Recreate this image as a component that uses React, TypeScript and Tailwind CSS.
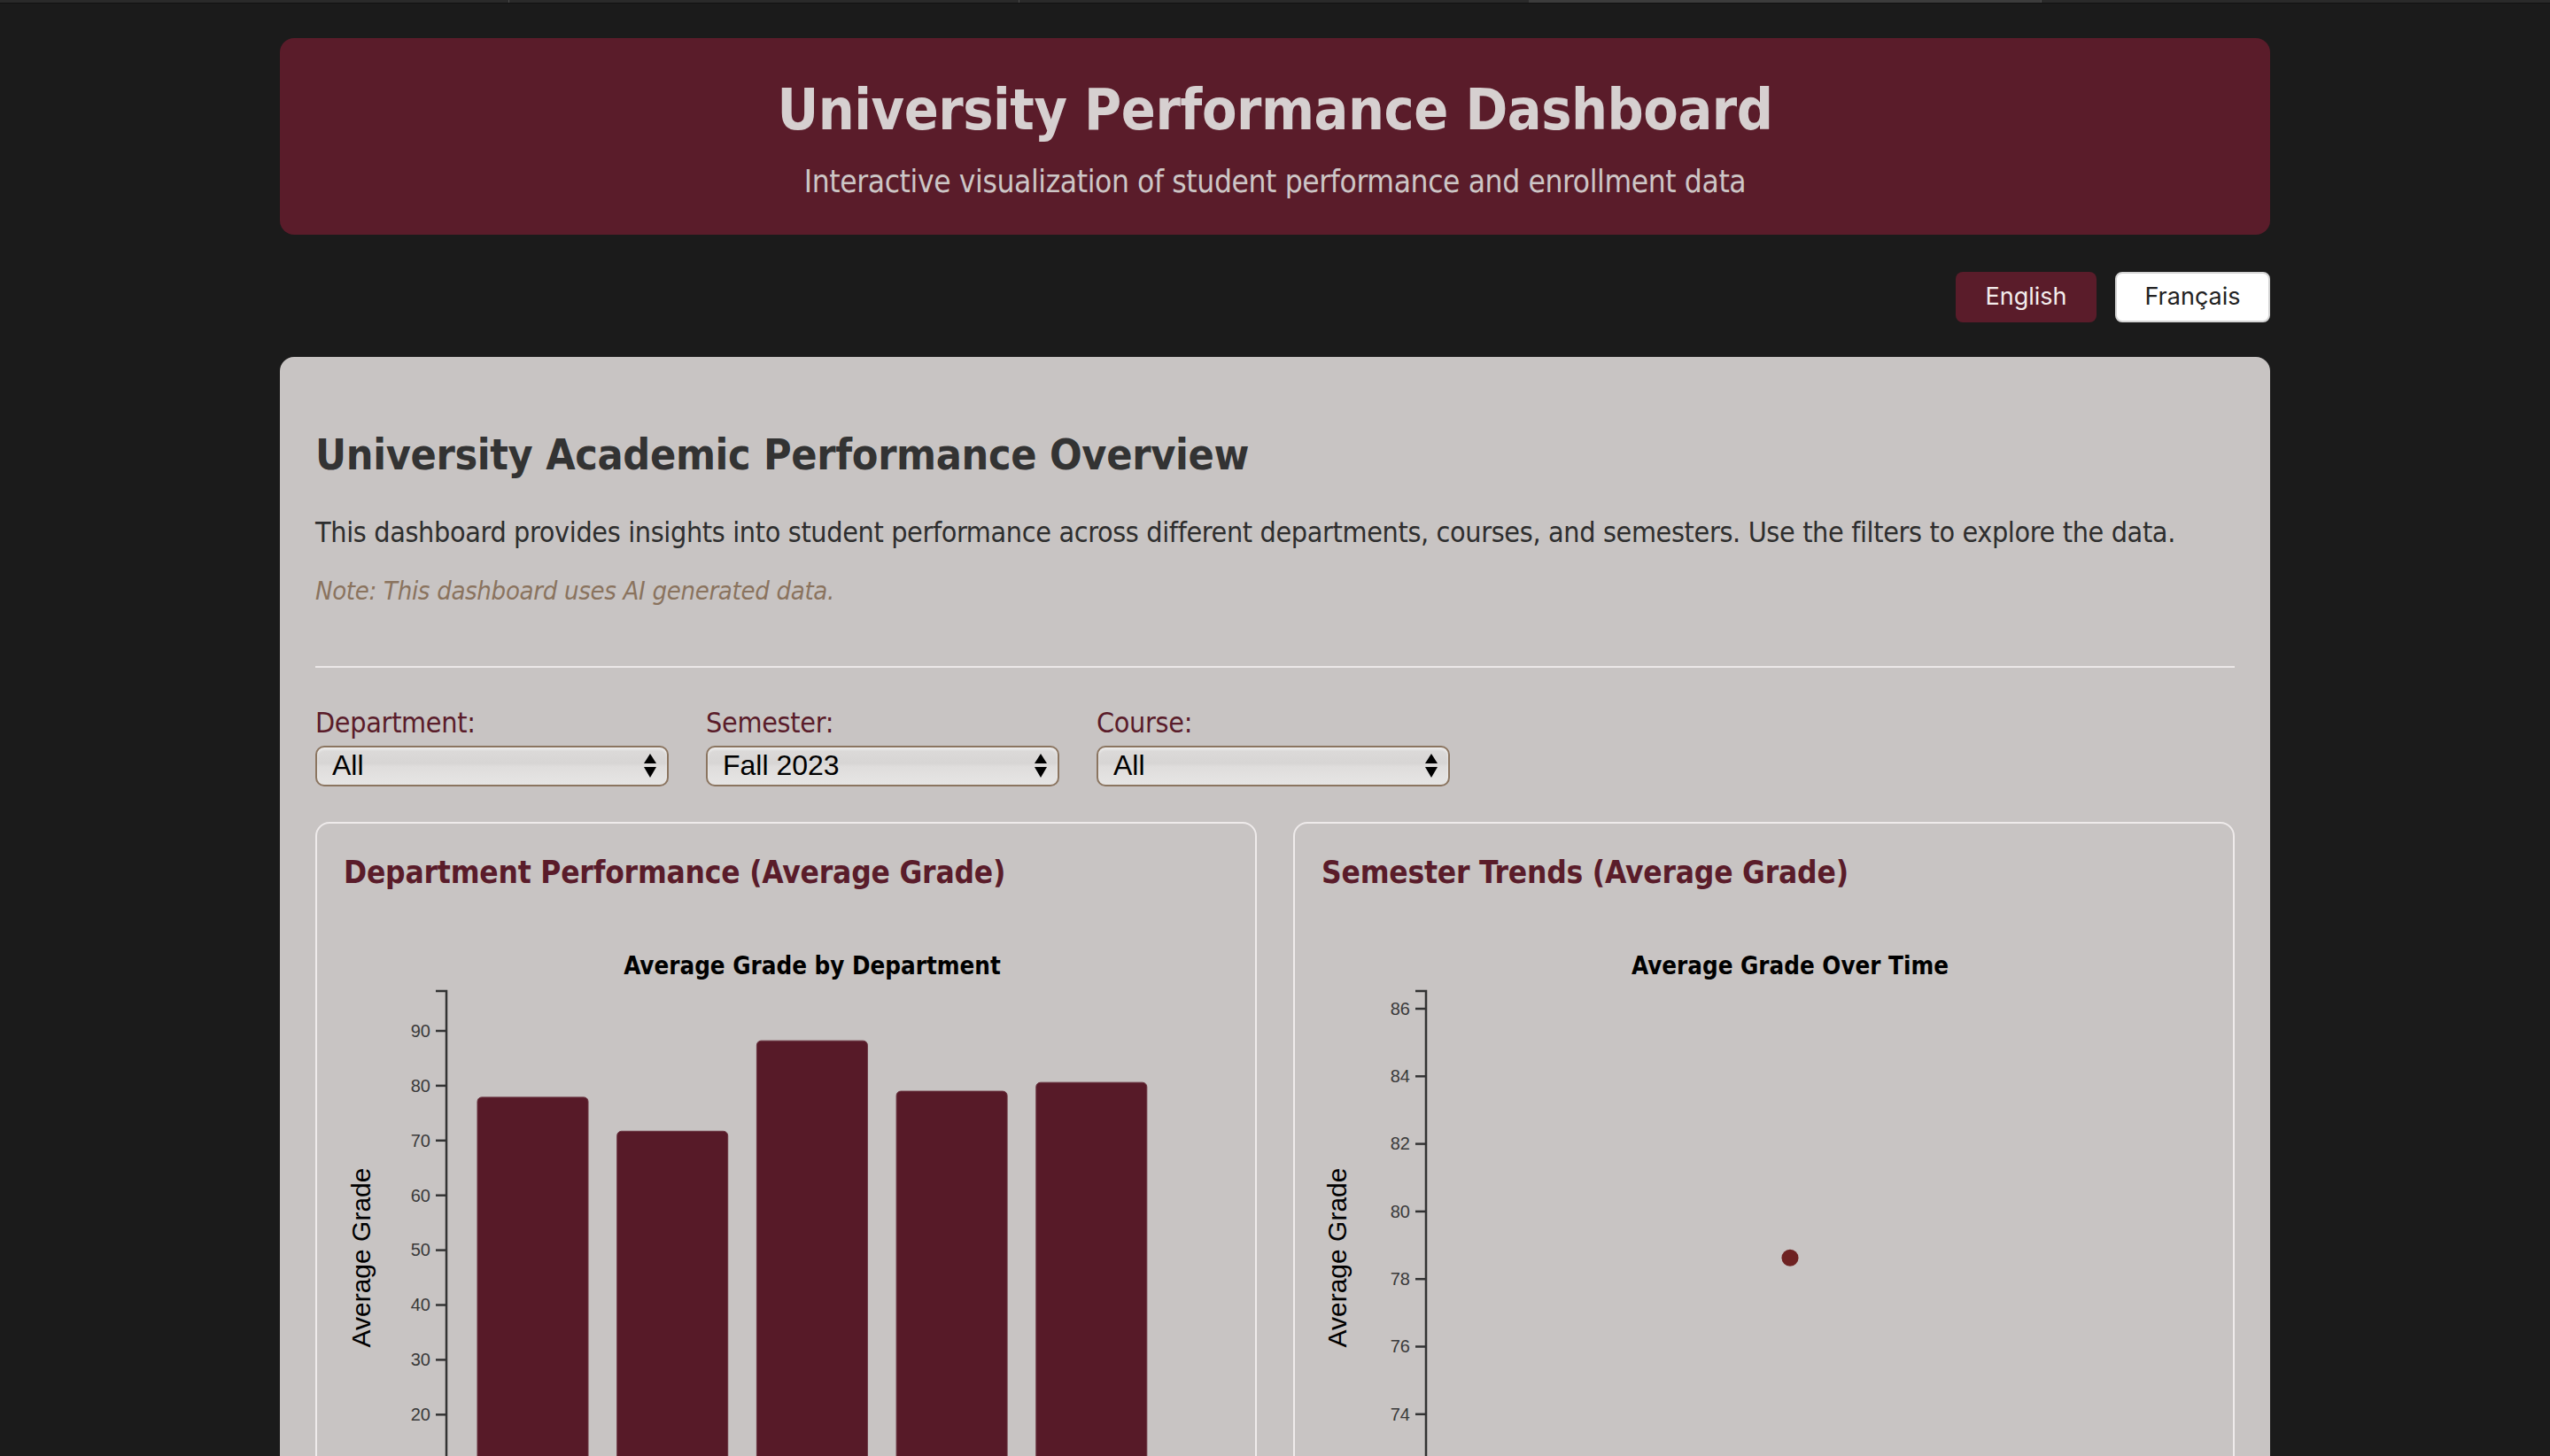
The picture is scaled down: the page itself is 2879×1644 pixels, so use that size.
import React, { useState } from "react";

const deptData = [
  { name: "Computer Science", grade: 77.9 },
  { name: "Mathematics", grade: 71.7 },
  { name: "Engineering", grade: 88.2 },
  { name: "Biology", grade: 79.0 },
  { name: "Business", grade: 80.6 },
];

const trendData = [{ semester: "Fall 2023", grade: 78.63 }];

// left chart scale: 90 sits at y=125, 6.19px per point
const yDept = (v: number) => 125 + (90 - v) * 6.19;
// right chart scale: 86 sits at y=100, 38.15px per point
const yTrend = (v: number) => 100 + (86 - v) * 38.15;

function SelectBox({ value, options }: { value: string; options: string[] }) {
  return (
    <div className="relative w-[399px]">
      <select
        defaultValue={value}
        className="appearance-none w-full h-[46px] rounded-[10px] border-2 border-[#8b7560] bg-[linear-gradient(to_bottom,#dddbda_0%,#d7d5d4_42%,#dfdddc_52%,#e6e5e4_100%)] pl-[17px] pr-10 pb-[2px] text-[32px] leading-none text-black font-['Liberation_Sans',Arial,sans-serif] shadow-[inset_0_2px_3px_rgba(255,255,255,0.6)] outline-none"
      >
        {options.map((o) => (
          <option key={o}>{o}</option>
        ))}
      </select>
      <svg
        className="pointer-events-none absolute right-[14px] top-[9px]"
        width="14"
        height="28"
        viewBox="0 0 14 28"
      >
        <path d="M7 0 L14 11 L0 11 Z" fill="#000" />
        <path d="M0 15 L14 15 L7 27 Z" fill="#000" />
      </svg>
    </div>
  );
}

function AxisY({ ticks, y, top, bottom }: { ticks: number[]; y: (v: number) => number; top: number; bottom: number }) {
  return (
    <g>
      <path d={`M-12,${top}H0V${bottom}H-12`} fill="none" stroke="#333" strokeWidth="2.5" />
      {ticks.map((t) => (
        <g key={t} transform={`translate(0,${y(t)})`}>
          <line x1="-12" x2="0" stroke="#333" strokeWidth="2.5" />
          <text x="-18" dy="0.34em" textAnchor="end" fontSize="20" fill="#3a3a3a" fontFamily="'Liberation Sans', Arial, sans-serif">
            {t}
          </text>
        </g>
      ))}
    </g>
  );
}

function DeptChart() {
  return (
    <svg width="997" height="780" className="mt-[33px] block overflow-visible">
      <text x="529" y="51" dy="0.35em" textAnchor="middle" fontSize="27.5" fontWeight="bold" fill="#000">
        Average Grade by Department
      </text>
      <text
        transform="translate(19,381) rotate(-90)"
        textAnchor="middle"
        dy="0.35em"
        fontSize="30"
        fill="#000"
        fontFamily="'Liberation Sans', Arial, sans-serif"
      >
        Average Grade
      </text>
      <g transform="translate(116,0)">
        {deptData.map((d, i) => (
          <rect
            key={d.name}
            x={35 + i * 157.7}
            y={yDept(d.grade)}
            width="125"
            height={yDept(0) - yDept(d.grade)}
            rx="5"
            fill="#571a28"
            stroke="#6a3440"
            strokeWidth="1"
          />
        ))}
        <AxisY ticks={[0, 10, 20, 30, 40, 50, 60, 70, 80, 90]} y={yDept} top={80} bottom={yDept(0)} />
        <path d={`M0,${yDept(0)}H820`} stroke="#333" strokeWidth="2.5" />
        {deptData.map((d, i) => (
          <text
            key={d.name}
            x={35 + i * 157.7 + 62.5}
            y={yDept(0) + 36}
            textAnchor="middle"
            fontSize="20"
            fill="#3a3a3a"
            fontFamily="'Liberation Sans', Arial, sans-serif"
          >
            {d.name}
          </text>
        ))}
      </g>
    </svg>
  );
}

function TrendChart() {
  return (
    <svg width="997" height="780" className="mt-[33px] block overflow-visible">
      <text x="529" y="51" dy="0.35em" textAnchor="middle" fontSize="27.5" fontWeight="bold" fill="#000">
        Average Grade Over Time
      </text>
      <text
        transform="translate(17,381) rotate(-90)"
        textAnchor="middle"
        dy="0.35em"
        fontSize="30"
        fill="#000"
        fontFamily="'Liberation Sans', Arial, sans-serif"
      >
        Average Grade
      </text>
      <g transform="translate(118,0)">
        <AxisY ticks={[72, 74, 76, 78, 80, 82, 84, 86]} y={yTrend} top={80} bottom={682} />
        <path d="M0,682H822" stroke="#333" strokeWidth="2.5" />
        {trendData.map((d) => (
          <g key={d.semester}>
            <circle cx="411" cy={yTrend(d.grade)} r="9.5" fill="#6e2222" />
            <text x="411" y="718" textAnchor="middle" fontSize="20" fill="#3a3a3a" fontFamily="'Liberation Sans', Arial, sans-serif">
              {d.semester}
            </text>
          </g>
        ))}
      </g>
    </svg>
  );
}

export default function App() {
  const [lang, setLang] = useState("en");

  return (
    <div className="min-h-screen bg-[#1b1b1b] font-['DejaVu_Sans_Condensed','DejaVu_Sans',sans-serif] pb-20">
      {/* browser tab strip */}
      <div className="flex h-[4px] bg-[#2a2a2a] border-b border-[#111]">
        <div className="w-[575px] border-r border-[#4a4a4a]" />
        <div className="w-[576px] border-r border-[#4a4a4a]" />
        <div className="w-[575px]" />
        <div className="w-[578px] bg-[#3c3c3c]" />
        <div className="flex-1 border-l border-[#4a4a4a]" />
      </div>

      <div className="w-[2247px] mx-auto pt-[39px]">
        <header className="h-[222px] rounded-[16px] bg-[#5a1c2a] flex flex-col items-center pt-[43px]">
          <h1 className="text-[64px] leading-[1.2] font-bold tracking-[-0.45px] text-[#d6d0d0]">
            University Performance Dashboard
          </h1>
          <p className="mt-[21px] text-[35px] leading-[1.2] tracking-[-0.38px] text-[#cdc6c6]">
            Interactive visualization of student performance and enrollment data
          </p>
        </header>

        <div className="flex justify-end gap-[21px] mt-[42px] font-['Inter',sans-serif] text-[27px]">
          <button
            onClick={() => setLang("en")}
            className="h-[57px] w-[159px] rounded-[8px] bg-[#5a1c2a] text-[#f3ecec]"
          >
            English
          </button>
          <button
            onClick={() => setLang("fr")}
            className="h-[57px] w-[175px] rounded-[8px] bg-white border-2 border-[#d4d4d4] text-[#222]"
          >
            Français
          </button>
        </div>

        <main className="mt-[39px] rounded-[16px] bg-[#c8c4c3] px-[40px] pt-[82px] pb-[40px]">
          <h2 className="text-[48px] leading-[1.2] font-bold tracking-[-0.32px] text-[#333]">
            University Academic Performance Overview
          </h2>
          <p className="mt-[34px] text-[32px] leading-[1.5] tracking-[-0.35px] text-[#2e2e2e]">
            This dashboard provides insights into student performance across different departments, courses, and
            semesters. Use the filters to explore the data.
          </p>
          <p className="mt-[21px] text-[29px] leading-[1.5] italic tracking-[-0.3px] text-[#8a735e]">
            Note: This dashboard uses AI generated data.
          </p>

          <hr className="mt-[63px] border-0 h-[2px] bg-[#ece8e8]" />

          <div className="flex gap-[42px] mt-[43px]">
            <div>
              <label className="block text-[32px] leading-[1.2] tracking-[-0.3px] text-[#5a1c2a]">Department:</label>
              <div className="mt-[7px]">
                <SelectBox value="All" options={["All", "Computer Science", "Mathematics", "Engineering", "Biology", "Business"]} />
              </div>
            </div>
            <div>
              <label className="block text-[32px] leading-[1.2] tracking-[-0.3px] text-[#5a1c2a]">Semester:</label>
              <div className="mt-[7px]">
                <SelectBox value="Fall 2023" options={["All", "Fall 2023", "Spring 2024"]} />
              </div>
            </div>
            <div>
              <label className="block text-[32px] leading-[1.2] tracking-[-0.3px] text-[#5a1c2a]">Course:</label>
              <div className="mt-[7px]">
                <SelectBox value="All" options={["All"]} />
              </div>
            </div>
          </div>

          <div className="grid grid-cols-2 gap-[41px] mt-[40px]">
            <section className="rounded-[16px] border-2 border-[#efebeb] px-[30px] pt-[34px] pb-[30px]">
              <h3 className="text-[35px] leading-[1.2] font-bold tracking-[-0.2px] text-[#5a1c2a]">
                Department Performance (Average Grade)
              </h3>
              <DeptChart />
            </section>
            <section className="rounded-[16px] border-2 border-[#efebeb] px-[30px] pt-[34px] pb-[30px]">
              <h3 className="text-[35px] leading-[1.2] font-bold tracking-[-0.2px] text-[#5a1c2a]">
                Semester Trends (Average Grade)
              </h3>
              <TrendChart />
            </section>
          </div>
        </main>
      </div>
      {lang === "fr" ? null : null}
    </div>
  );
}
